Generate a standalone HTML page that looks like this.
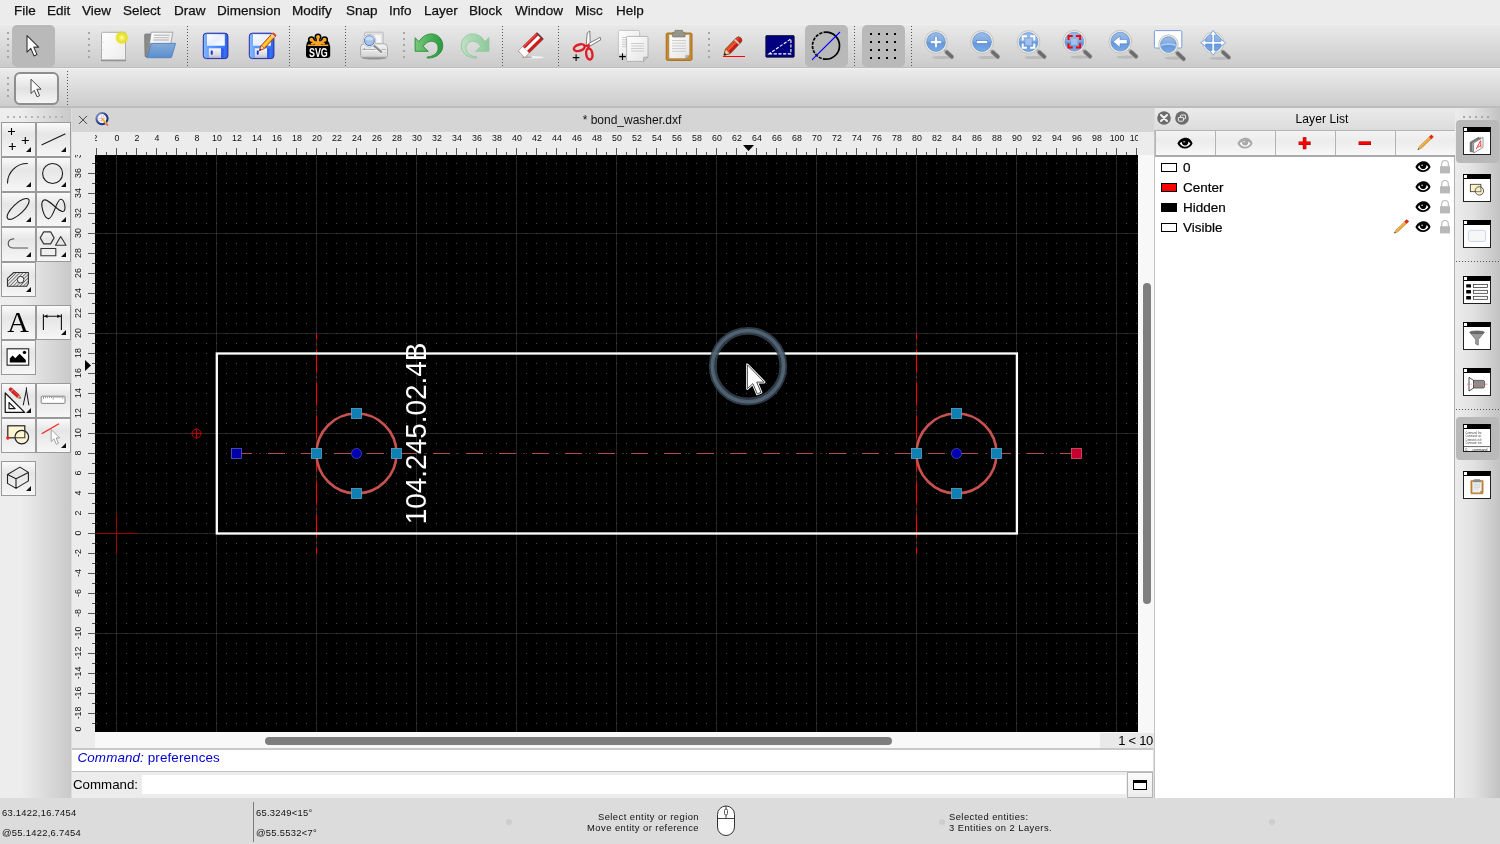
<!DOCTYPE html>
<html><head><meta charset="utf-8"><title>QCAD - bond_washer.dxf</title>
<style>
*{box-sizing:border-box;margin:0;padding:0}
html,body{width:1500px;height:844px;overflow:hidden;background:#dcdcdc;font-family:"Liberation Sans", sans-serif;color:#000}
.abs{position:absolute}
#menubar{position:absolute;left:0;top:0;width:1500px;height:24px;background:#ececec}
#menubar span{position:absolute;top:1.5px;font-size:13.5px;line-height:17px;color:#111;white-space:nowrap;-webkit-text-stroke:0.25px #111}
#tb1{position:absolute;left:0;top:24px;width:1500px;height:45px;background:linear-gradient(#f3f3f3 0,#e9e9e9 1.2px,#cbcbcb 42.8px,#bebebe 42.8px,#bebebe 44.5px,#f0f0f0 44.5px)}
#tb2{position:absolute;left:0;top:69px;width:1500px;height:39px;background:linear-gradient(#f0f0f0 0,#eaeaea 1px,#cdcdcd 36.6px,#bcbcbc 36.6px)}
.hdl{position:absolute;width:2px;background-image:linear-gradient(#a6a6a6 2px,transparent 2px);background-size:2px 6px}
.vsep{position:absolute;width:1px;background-image:linear-gradient(#555 1px,transparent 1px);background-size:1px 3px}
.sel{position:absolute;background:#b9b9b9;border-radius:5px}
svg{position:absolute;overflow:visible}
#left{position:absolute;left:0;top:108px;width:71px;height:690px;background:linear-gradient(90deg,#ededed,#ededed 30%,#c9c9c9)}
.tbtn{position:absolute;width:35px;height:35px;border:1px solid #9a9a9a;background:linear-gradient(#fafafa,#e6e6e6 35%,#f6f6f6)}
.corner{position:absolute;right:4px;bottom:4px;width:0;height:0;border-left:5px solid transparent;border-bottom:5px solid #111}
#mdi{position:absolute;left:72px;top:108px;width:1082px;height:640px;background:#ececec}
#tabbar{position:absolute;left:0;top:0;width:1082px;height:24px;background:#d5d5d5}
#canvas{position:absolute;left:23px;top:47px;width:1043px;height:577px;background:#000;overflow:hidden}
#hruler{position:absolute;left:23px;top:24px;width:1043px;height:23px;background:#ececec;overflow:hidden}
#vruler{position:absolute;left:0;top:47px;width:23px;height:577px;background:#ececec;overflow:hidden}
.rl{position:absolute;font-size:9.4px;line-height:12px;color:#111;white-space:nowrap}
#status{position:absolute;left:0;top:798px;width:1500px;height:46px;background:#dcdcdc}
#status div{position:absolute;font-size:9.4px;line-height:12px;color:#111;white-space:nowrap;letter-spacing:0.45px}
#status div.num{letter-spacing:0.28px}
#layers{position:absolute;left:1155px;top:108px;width:300px;height:690px;background:#fff;border-right:1px solid #b0b0b0}
#right{position:absolute;left:1455px;top:108px;width:45px;height:690px;background:linear-gradient(90deg,#ececec,#e2e2e2 40%,#c2c2c2)}
.lrow{position:absolute;left:0;width:298px;height:20px;font-size:13.5px;line-height:20px;-webkit-text-stroke:0.2px #000}
.lbtn{position:absolute;top:23px;height:24px;background:linear-gradient(#f4f4f4,#ececec 40%,#f8f8f8)}
</style></head><body><div id="root" style="position:absolute;left:0;top:0;width:1500px;height:844px;will-change:transform">

<div id="menubar">
<span style="left:14px">File</span>
<span style="left:47px">Edit</span>
<span style="left:82px">View</span>
<span style="left:123px">Select</span>
<span style="left:174px">Draw</span>
<span style="left:217px">Dimension</span>
<span style="left:292px">Modify</span>
<span style="left:346px">Snap</span>
<span style="left:389px">Info</span>
<span style="left:424px">Layer</span>
<span style="left:469px">Block</span>
<span style="left:515px">Window</span>
<span style="left:575px">Misc</span>
<span style="left:616px">Help</span>
</div>
<div id="tb1">
<div class="sel" style="left:12px;top:1px;width:43px;height:42px"></div>
<div class="sel" style="left:805px;top:1px;width:43px;height:42px"></div>
<div class="sel" style="left:862px;top:1px;width:43px;height:42px"></div>
<div class="hdl" style="left:7px;top:8px;height:28px"></div>
<div class="hdl" style="left:88px;top:8px;height:28px"></div>
<div class="hdl" style="left:403px;top:8px;height:28px"></div>
<div class="hdl" style="left:708px;top:8px;height:28px"></div>
<div class="vsep" style="left:187px;top:2px;height:40px"></div>
<div class="vsep" style="left:289px;top:2px;height:40px"></div>
<div class="vsep" style="left:345px;top:2px;height:40px"></div>
<div class="vsep" style="left:502px;top:2px;height:40px"></div>
<div class="vsep" style="left:558px;top:2px;height:40px"></div>
<div class="vsep" style="left:854px;top:2px;height:40px"></div>
<div class="vsep" style="left:911px;top:2px;height:40px"></div>
<svg style="left:0;top:0" width="1500" height="45" viewBox="0 24 1500 45"><defs>
<linearGradient id="gpage" x1="0" y1="0" x2="1" y2="1"><stop offset="0" stop-color="#ffffff"/><stop offset="1" stop-color="#ececec"/></linearGradient>
<radialGradient id="gglow"><stop offset="0" stop-color="#fffff0"/><stop offset="0.25" stop-color="#f4f060"/><stop offset="0.7" stop-color="#e6e020"/><stop offset="1" stop-color="#e6e020" stop-opacity="0"/></radialGradient>
<linearGradient id="gfold" x1="0" y1="0" x2="0" y2="1"><stop offset="0" stop-color="#86acd8"/><stop offset="1" stop-color="#5a8ecf"/></linearGradient>
<linearGradient id="gflop" x1="0" y1="0" x2="1" y2="0"><stop offset="0" stop-color="#8cbcff"/><stop offset="0.25" stop-color="#5c9cff"/><stop offset="0.8" stop-color="#3c7cf8"/><stop offset="1" stop-color="#2a60e8"/></linearGradient>
<linearGradient id="glabel" x1="0" y1="0" x2="1" y2="1"><stop offset="0" stop-color="#ffffff"/><stop offset="0.5" stop-color="#e8eeff"/><stop offset="1" stop-color="#ffffff"/></linearGradient>
<linearGradient id="gshut" x1="0" y1="0" x2="0" y2="1"><stop offset="0" stop-color="#f4f4f8"/><stop offset="0.7" stop-color="#d8d8e2"/><stop offset="1" stop-color="#b8b8c8"/></linearGradient>
<linearGradient id="gpencil" x1="0" y1="0" x2="0" y2="1"><stop offset="0" stop-color="#ff9a00"/><stop offset="0.45" stop-color="#ffe040"/><stop offset="1" stop-color="#ff8c00"/></linearGradient>
<linearGradient id="gredp" x1="0" y1="0" x2="0" y2="1"><stop offset="0" stop-color="#e85a30"/><stop offset="0.5" stop-color="#e02020"/><stop offset="1" stop-color="#c01010"/></linearGradient>
<linearGradient id="gundo" x1="0" y1="0" x2="1" y2="0"><stop offset="0" stop-color="#78c878"/><stop offset="1" stop-color="#2a9a40"/></linearGradient>
<linearGradient id="gredo" x1="0" y1="0" x2="1" y2="0"><stop offset="0" stop-color="#8cc89a"/><stop offset="1" stop-color="#bfe2c4"/></linearGradient>
<linearGradient id="glens" x1="0" y1="0" x2="0" y2="1"><stop offset="0" stop-color="#9cbde6"/><stop offset="0.5" stop-color="#7ea8e0"/><stop offset="0.51" stop-color="#6496dc"/><stop offset="1" stop-color="#78aae6"/></linearGradient>
<linearGradient id="gprn" x1="0" y1="0" x2="0" y2="1"><stop offset="0" stop-color="#f4f4f4"/><stop offset="1" stop-color="#d4d4d4"/></linearGradient>
<linearGradient id="gpaper" x1="0" y1="0" x2="1" y2="1"><stop offset="0" stop-color="#ffffff"/><stop offset="1" stop-color="#e4e4e4"/></linearGradient>
</defs><path d="M27.00 35.60L27.00 52.10L30.80 48.40L34.00 55.90L37.00 54.60L33.80 47.10L38.70 47.10Z" fill="#fff" stroke="#333" stroke-width="1.1" stroke-linejoin="round"/><rect x="101" y="59" width="25" height="2.2" rx="1" fill="#8c8c8c"/><rect x="101.5" y="32.3" width="24" height="27.6" rx="1.2" fill="url(#gpage)" stroke="#a4a4a4" stroke-width="0.9"/><path d="M103 42.2h1.2M103 49.6h1.2" stroke="#c8c8c8" stroke-width="0.7"/><circle cx="121.8" cy="37.7" r="7" fill="url(#gglow)"/><path d="M144.6 35.2q0-1.2 1.2-1.2h5.5l-3 23h-2.2q-1 0-1.1-1z" fill="#8a8a8a" stroke="#666" stroke-width="0.6"/><path d="M151.2 32.2h21.6l-2 11.5h-20.8l-2.2 12z" fill="url(#gpaper)" stroke="#888" stroke-width="0.7"/><path d="M154 35.3h15.8M153.6 37.6h15.6M153.2 40h15.6" stroke="#c4c4c4" stroke-width="1.4"/><path d="M151.4 43.4h24.2l-3.9 13.4q-.3.9-1.2.9h-23.4z" fill="url(#gfold)" stroke="#4a7cc0" stroke-width="0.8" stroke-linejoin="round"/><rect x="203.3" y="33.2" width="24.6" height="25.4" rx="3" fill="url(#gflop)" stroke="#2a2aa0" stroke-width="1"/><rect x="207.0" y="34.2" width="17.8" height="11.5" fill="url(#glabel)"/><rect x="208.8" y="48.3" width="12.3" height="9.6" fill="url(#gshut)"/><rect x="221.10000000000002" y="48.3" width="2.6" height="9.6" fill="#2a5cf0"/><rect x="210.8" y="50.4" width="1.9" height="4.3" rx="0.6" fill="#1030e0"/><rect x="249.3" y="33.2" width="24.6" height="25.4" rx="3" fill="url(#gflop)" stroke="#2a2aa0" stroke-width="1"/><rect x="253.0" y="34.2" width="17.8" height="11.5" fill="url(#glabel)"/><rect x="254.8" y="48.3" width="12.3" height="9.6" fill="url(#gshut)"/><rect x="267.1" y="48.3" width="2.6" height="9.6" fill="#2a5cf0"/><rect x="256.8" y="50.4" width="1.9" height="4.3" rx="0.6" fill="#1030e0"/><g transform="translate(259.4 50.7) rotate(-47.5)"><path d="M0 0L5.2 -2.2H21.5Q22.8 -2.2 22.8 0Q22.8 2.2 21.5 2.2H5.2Z" fill="url(#gpencil)" stroke="#b03010" stroke-width="0.8" stroke-linejoin="round"/><path d="M0 0L5.2 -2.2V2.2Z" fill="#f4dcb4" stroke="#b03010" stroke-width="0.6"/><path d="M0 0L1.9 -0.8V0.8Z" fill="#222"/><path d="M19.3 -2.2h1.6v4.4h-1.6z" fill="#d8d8d0"/><path d="M20.9 -2.2H21.5Q22.8 -2.2 22.8 0Q22.8 2.2 21.5 2.2H20.9Z" fill="#d85028"/></g><g stroke="#000" stroke-width="2.6" stroke-linecap="round" fill="none"><path d="M318 45.4L318.0 37.0" stroke-width="4.6"/><circle cx="318.0" cy="37.0" r="1.9" stroke-width="3.2"/><path d="M318 45.4L311.4 39.7" stroke-width="4.6"/><circle cx="311.4" cy="39.7" r="1.9" stroke-width="3.2"/><path d="M318 45.4L324.6 39.7" stroke-width="4.6"/><circle cx="324.6" cy="39.7" r="1.9" stroke-width="3.2"/><path d="M318 45.4L310.1 44.3" stroke-width="4.6"/><circle cx="310.1" cy="44.3" r="1.9" stroke-width="3.2"/><path d="M318 45.4L325.9 44.3" stroke-width="4.6"/><circle cx="325.9" cy="44.3" r="1.9" stroke-width="3.2"/></g><rect x="306" y="43.8" width="24.2" height="14.2" rx="3" fill="#000"/><g stroke="#f9a72b" stroke-linecap="round" fill="none"><path d="M318.0 43.4L318.0 37.0" stroke-width="2.4"/><circle cx="318.0" cy="37.0" r="1" stroke-width="2"/><path d="M316.5 44.1L311.4 39.7" stroke-width="2.4"/><circle cx="311.4" cy="39.7" r="1" stroke-width="2"/><path d="M319.5 44.1L324.6 39.7" stroke-width="2.4"/><circle cx="324.6" cy="39.7" r="1" stroke-width="2"/><path d="M308.3 45.3H327.7" stroke-width="1.6"/><path d="M312 43.6Q318 40.5 324 43.6" stroke-width="2"/></g><text x="309" y="56.8" font-family='"Liberation Sans", sans-serif' font-weight="bold" font-size="13.6" fill="#fff" textLength="18.8" lengthAdjust="spacingAndGlyphs">SVG</text><ellipse cx="374" cy="57.8" rx="12.5" ry="1.8" fill="#808080" fill-opacity="0.8"/><rect x="364.6" y="32.2" width="18.6" height="13" rx="0.8" fill="#e2e2e2" stroke="#b4b4b4" stroke-width="0.8"/><rect x="375" y="35" width="6" height="7.5" fill="#f6f6f6"/><path d="M360.6 47.5Q360.6 43.8 364 43.8H384Q387.5 43.8 387.5 47.5V55.5Q387.5 57.2 385.8 57.2H362.3Q360.6 57.2 360.6 55.5Z" fill="url(#gprn)" stroke="#a4a4a4" stroke-width="0.9"/><path d="M362.5 49.6H385.6" stroke="#a8a8a8" stroke-width="1"/><path d="M362.5 50.6H385.6" stroke="#fafafa" stroke-width="0.8"/><circle cx="364.3" cy="48.8" r="0.5" fill="#666"/><path d="M374.2 45.8L381.3 51.8" stroke="#f0f0f0" stroke-width="4" stroke-linecap="round"/><path d="M374.2 45.8L381.3 51.8" stroke="#8c8c8c" stroke-width="2.2" stroke-linecap="round"/><circle cx="369.4" cy="40.7" r="6.4" fill="#f6f6f6" stroke="#b0b0b0" stroke-width="0.7"/><circle cx="369.4" cy="40.7" r="4.9" fill="#a8c2e4" stroke="#3a78d0" stroke-width="1"/><path d="M365 39.5A4.6 4.6 0 0 1 373.8 39.5Q369.4 41.5 365 39.5Z" fill="#d4e2f4" fill-opacity="0.8"/><path d="M414.6 37.4V51.5H428.2L422.9 46.4C425.5 42.6 429.5 40.6 432.8 41.2C436.8 42 439 45.5 438.3 49.6C437.6 53.6 433.8 56.8 427 57.4C427 57.6 427 58.2 427.4 58.5C436.5 58.6 442.6 53.5 443.2 46.8C443.8 39.5 438.8 34 432.5 33.5C427 33.1 421.5 36.5 418.6 41.5Z" fill="url(#gundo)" stroke="#1f8a34" stroke-width="0.9" stroke-linejoin="round" transform="translate(429 46) scale(0.965) translate(-429 -46)"/><path d="M414.6 37.4V51.5H428.2L422.9 46.4C425.5 42.6 429.5 40.6 432.8 41.2C436.8 42 439 45.5 438.3 49.6C437.6 53.6 433.8 56.8 427 57.4C427 57.6 427 58.2 427.4 58.5C436.5 58.6 442.6 53.5 443.2 46.8C443.8 39.5 438.8 34 432.5 33.5C427 33.1 421.5 36.5 418.6 41.5Z" fill="url(#gredo)" stroke="#8cc69a" stroke-width="0.9" stroke-linejoin="round" transform="translate(904 0) scale(-1 1) translate(429 46) scale(0.965) translate(-429 -46)"/><ellipse cx="534" cy="57.3" rx="10" ry="1.3" fill="#f4f4f4" fill-opacity="0.9"/><ellipse cx="527" cy="57.2" rx="5" ry="0.9" fill="#9a7a7a" fill-opacity="0.6"/><g transform="translate(521.5 54.1) rotate(-44.4)"><rect x="0" y="-4.6" width="26.2" height="9.2" rx="0.8" fill="#d01a1a" stroke="#8a1010" stroke-width="0.5"/><rect x="0" y="-1.6" width="25.6" height="3.2" fill="#fff"/><rect x="0" y="-4.6" width="6.2" height="9.2" fill="#fff" stroke="#b0b0b0" stroke-width="0.5"/><rect x="24.8" y="-4.6" width="1.5" height="9.2" fill="#6a3a3a"/><rect x="6.2" y="-4.6" width="18.6" height="1.6" fill="#e86060" fill-opacity="0.7"/></g><path d="M586.2 45.5L587.2 33L589.8 31L590.3 45.8Z" fill="#fff" stroke="#606060" stroke-width="0.8" stroke-linejoin="round"/><path d="M588.6 43.5L600.2 37.3L600.8 39.8L589.5 46.3Z" fill="#fff" stroke="#606060" stroke-width="0.8" stroke-linejoin="round"/><ellipse cx="579.3" cy="47.7" rx="5.6" ry="3.1" transform="rotate(-18 579.3 47.7)" fill="none" stroke="#e01c24" stroke-width="2.4"/><ellipse cx="589.3" cy="54" rx="3.1" ry="5.6" transform="rotate(-8 589.3 54)" fill="none" stroke="#e01c24" stroke-width="2.4"/><path d="M584 46.5L588.5 45.2L588.2 49" stroke="#e01c24" stroke-width="2.3" fill="none"/><path d="M572.8 57.6h6.6M576.1 54.3v6.6" stroke="#000" stroke-width="1.1"/><path d="M619.6 30.4H638.4Q639.6 30.4 639.6 31.6V55H618.4V31.6Q618.4 30.4 619.6 30.4Z" fill="url(#gpaper)" stroke="#b4b4b4" stroke-width="0.7"/><path d="M622 37.5h6M622 39.8h6M622 42.1h6M622 44.4h6M622 46.7h6" stroke="#c8c8c8" stroke-width="0.9"/><path d="M627.8 36.4H646.8Q648 36.4 648 37.6V57L643.5 61.4H627.8Q626.6 61.4 626.6 60.2V37.6Q626.6 36.4 627.8 36.4Z" fill="url(#gpaper)" stroke="#a8a8a8" stroke-width="0.8"/><path d="M643.5 61.4V57.6Q643.5 57 644.1 57H648Z" fill="#c4c4c4" stroke="#999" stroke-width="0.5"/><path d="M631 43.5h13M631 46.0h13M631 48.5h13M631 51.0h13" stroke="#c8c8c8" stroke-width="0.9"/><path d="M619.2 56.6h6.6M622.5 53.3v6.6" stroke="#000" stroke-width="1.1"/><rect x="666.2" y="33" width="25.8" height="27.4" rx="1.4" fill="#c88a2c" stroke="#a06a14" stroke-width="0.9"/><path d="M669 34.6H689.6V55L686 58.6H669Z" fill="url(#gpaper)" stroke="#9a8a6a" stroke-width="0.5"/><path d="M685.6 58.6V55.4H689.6Z" fill="#b8b8b8" stroke="#8a8a8a" stroke-width="0.4"/><path d="M672 40.5h14M672 43.2h14M672 45.9h14M672 48.6h14M672 51.3h14" stroke="#c8c8c8" stroke-width="0.9"/><path d="M675 30.3H682.6V32.2H684Q685.2 32.2 685.2 33.4V36.4Q685.2 37 684.6 37H673Q672.4 37 672.4 36.4V33.4Q672.4 32.2 673.6 32.2H675Z" fill="#95958a" stroke="#70706a" stroke-width="0.6"/><path d="M723 56.5H745" stroke="#d8f0f0" stroke-width="2.6"/><path d="M723 56.5H745" stroke="#ff0000" stroke-width="1.2"/><g transform="translate(724 55.3) rotate(-46)"><path d="M0 0L5.6 -3.2H21Q24.2 -3.2 24.2 0Q24.2 3.2 21 3.2H5.6Z" fill="url(#gredp)" stroke="#7a4a10" stroke-width="0.9" stroke-linejoin="round"/><path d="M0 0L5.6 -3.2V3.2Z" fill="#f4cca4" stroke="#7a4a10" stroke-width="0.6"/><path d="M0 0L2.3 -1.3V1.3Z" fill="#111"/><path d="M17.8 -3.2h1.7v6.4h-1.7z" fill="#d0d0d0"/><path d="M6 -0.6H17.5" stroke="#e87040" stroke-width="1.2"/></g><rect x="765.8" y="35.6" width="28.4" height="21.6" rx="0.8" fill="#000080" stroke="#101020" stroke-width="0.8"/><path d="M769 53.9H790.9V38.9Z" fill="none" stroke="#fff" stroke-width="1.1" stroke-dasharray="3.2 1.5"/><path d="M826 32.2A13.5 13.5 0 0 1 826 59.2" fill="none" stroke="#000" stroke-width="1.7"/><path d="M826 59.2A13.5 13.5 0 0 1 826 32.2" fill="none" stroke="#000" stroke-width="1.7" stroke-dasharray="3.2 1.2"/><path d="M812 59.8L840 32" stroke="#0000ff" stroke-width="1.1"/><path d="M870 33h2v2h-2zM870 41h2v2h-2zM870 49h2v2h-2zM870 57h2v2h-2zM878 33h2v2h-2zM878 41h2v2h-2zM878 49h2v2h-2zM878 57h2v2h-2zM886 33h2v2h-2zM886 41h2v2h-2zM886 49h2v2h-2zM886 57h2v2h-2zM894 33h2v2h-2zM894 41h2v2h-2zM894 49h2v2h-2zM894 57h2v2h-2z" fill="#000"/><ellipse cx="942" cy="57.5" rx="10" ry="1.6" fill="#a8a8a8" fill-opacity="0.55"/><path d="M943.4 49.2L947.0 52.4" stroke="#b4b4b4" stroke-width="1.8"/><path d="M946.6 52.0L951.8 56.8" stroke="#a4a4a4" stroke-width="4.6" stroke-linecap="round"/><path d="M946.8 52.2L951.8 56.8" stroke="#6c6c6c" stroke-width="3.2" stroke-linecap="round"/><circle cx="936" cy="42" r="11.4" fill="#ecece6" stroke="#b4b4ac" stroke-width="0.7"/><circle cx="936" cy="42" r="9.4" fill="url(#glens)" stroke="#5a8cd4" stroke-width="0.7"/><path d="M930.3 40.6H934.6V36.3H937.4V40.6H941.7V43.4H937.4V47.7H934.6V43.4H930.3Z" fill="#fff" stroke="#4a7cc8" stroke-width="0.6"/><ellipse cx="988" cy="57.5" rx="10" ry="1.6" fill="#a8a8a8" fill-opacity="0.55"/><path d="M989.4 49.2L993.0 52.4" stroke="#b4b4b4" stroke-width="1.8"/><path d="M992.6 52.0L997.8 56.8" stroke="#a4a4a4" stroke-width="4.6" stroke-linecap="round"/><path d="M992.8 52.2L997.8 56.8" stroke="#6c6c6c" stroke-width="3.2" stroke-linecap="round"/><circle cx="982" cy="42" r="11.4" fill="#ecece6" stroke="#b4b4ac" stroke-width="0.7"/><circle cx="982" cy="42" r="9.4" fill="url(#glens)" stroke="#5a8cd4" stroke-width="0.7"/><rect x="976.3" y="40.6" width="11.4" height="2.8" fill="#fff" stroke="#4a7cc8" stroke-width="0.6"/><ellipse cx="1034.5" cy="57.5" rx="10" ry="1.6" fill="#a8a8a8" fill-opacity="0.55"/><path d="M1035.9 49.2L1039.5 52.4" stroke="#b4b4b4" stroke-width="1.8"/><path d="M1039.1 52.0L1044.3 56.8" stroke="#a4a4a4" stroke-width="4.6" stroke-linecap="round"/><path d="M1039.3 52.2L1044.3 56.8" stroke="#6c6c6c" stroke-width="3.2" stroke-linecap="round"/><circle cx="1028.5" cy="42" r="11.4" fill="#ecece6" stroke="#b4b4ac" stroke-width="0.7"/><circle cx="1028.5" cy="42" r="9.4" fill="url(#glens)" stroke="#5a8cd4" stroke-width="0.7"/><rect x="1025.3" y="38.8" width="6.4" height="6.4" fill="#a4c0ea"/><path d="M1022.7 40.4V36.2H1026.9M1022.7 43.6V47.8H1026.9M1034.3 40.4V36.2H1030.1M1034.3 43.6V47.8H1030.1" stroke="#fff" stroke-width="2" fill="none"/><ellipse cx="1080.3" cy="57.2" rx="10" ry="1.6" fill="#a8a8a8" fill-opacity="0.55"/><path d="M1081.7 48.9L1085.3 52.1" stroke="#b4b4b4" stroke-width="1.8"/><path d="M1084.9 51.7L1090.1 56.5" stroke="#a4a4a4" stroke-width="4.6" stroke-linecap="round"/><path d="M1085.1 51.9L1090.1 56.5" stroke="#6c6c6c" stroke-width="3.2" stroke-linecap="round"/><circle cx="1074.3" cy="41.7" r="11.4" fill="#ecece6" stroke="#b4b4ac" stroke-width="0.7"/><circle cx="1074.3" cy="41.7" r="9.4" fill="url(#glens)" stroke="#5a8cd4" stroke-width="0.7"/><rect x="1071.1" y="38.5" width="6.4" height="6.4" fill="#a4c0ea"/><path d="M1068.5 40.1V35.900000000000006H1072.7M1068.5 43.300000000000004V47.5H1072.7M1080.1 40.1V35.900000000000006H1075.8999999999999M1080.1 43.300000000000004V47.5H1075.8999999999999" stroke="#ff0000" stroke-width="2" fill="none"/><ellipse cx="1126.3" cy="57.2" rx="10" ry="1.6" fill="#a8a8a8" fill-opacity="0.55"/><path d="M1127.7 48.9L1131.3 52.1" stroke="#b4b4b4" stroke-width="1.8"/><path d="M1130.9 51.7L1136.1 56.5" stroke="#a4a4a4" stroke-width="4.6" stroke-linecap="round"/><path d="M1131.1 51.9L1136.1 56.5" stroke="#6c6c6c" stroke-width="3.2" stroke-linecap="round"/><circle cx="1120.3" cy="41.7" r="11.4" fill="#ecece6" stroke="#b4b4ac" stroke-width="0.7"/><circle cx="1120.3" cy="41.7" r="9.4" fill="url(#glens)" stroke="#5a8cd4" stroke-width="0.7"/><path d="M1113.2 41.7L1120 36V39.6H1127.2V43.8H1120V47.4Z" fill="#fff" stroke="#4a7cc8" stroke-width="0.6" stroke-linejoin="round"/><rect x="1154.4" y="30.6" width="27.4" height="17.4" rx="1.2" fill="#fff" stroke="#6a92d8" stroke-width="0.9"/><ellipse cx="1174.4" cy="58.1" rx="10" ry="1.6" fill="#a8a8a8" fill-opacity="0.55"/><path d="M1174.8 50.8L1177.9 53.5" stroke="#b4b4b4" stroke-width="1.8"/><path d="M1177.5 53.2L1183.7 59.0" stroke="#a4a4a4" stroke-width="4.6" stroke-linecap="round"/><path d="M1177.7 53.4L1183.7 59.0" stroke="#6c6c6c" stroke-width="3.2" stroke-linecap="round"/><circle cx="1168.4" cy="44.6" r="9.8" fill="#ecece6" stroke="#b4b4ac" stroke-width="0.7"/><circle cx="1168.4" cy="44.6" r="7.800000000000001" fill="url(#glens)" stroke="#5a8cd4" stroke-width="0.7"/><path d="M1161 45.5Q1168.4 42.5 1175.8 45.5" stroke="#c4d8f4" stroke-width="1.6" fill="none" opacity="0.8"/><ellipse cx="1219.2" cy="58.3" rx="10" ry="1.6" fill="#a8a8a8" fill-opacity="0.55"/><path d="M1220.1 49.5L1223.4 52.5" stroke="#b4b4b4" stroke-width="1.8"/><path d="M1223.1 52.1L1228.7 57.4" stroke="#a4a4a4" stroke-width="4.6" stroke-linecap="round"/><path d="M1223.2 52.3L1228.7 57.4" stroke="#6c6c6c" stroke-width="3.2" stroke-linecap="round"/><circle cx="1213.2" cy="42.8" r="10.6" fill="#ecece6" stroke="#b4b4ac" stroke-width="0.7"/><circle cx="1213.2" cy="42.8" r="8.6" fill="url(#glens)" stroke="#5a8cd4" stroke-width="0.7"/><path d="M1213.2 30.4L1216.6 35.2H1214.4V41.6H1220.8V39.4L1225.8 42.8L1220.8 46.2V44H1214.4V50.4H1216.6L1213.2 55.2L1209.8 50.4H1212V44H1205.6V46.2L1200.6 42.8L1205.6 39.4V41.6H1212V35.2H1209.8Z" fill="#fff" stroke="#5a8cd8" stroke-width="0.7" stroke-linejoin="round"/></svg>
</div>
<div id="tb2">
<div class="hdl" style="left:7px;top:8px;height:22px"></div>
<div class="vsep" style="left:67px;top:2px;height:35px"></div>
<div class="abs" style="left:14px;top:3px;width:45px;height:33px;border:2px solid #8e8e8e;border-radius:6px;background:linear-gradient(#fafafa,#e2e2e2 50%,#f4f4f4)"></div>
<svg style="left:0;top:0" width="200" height="39" viewBox="0 69 200 39"><path d="M31.00 79.30L31.00 93.49L34.27 90.31L37.02 96.76L39.60 95.64L36.85 89.19L41.06 89.19Z" fill="#fff" stroke="#444" stroke-width="1.0" stroke-linejoin="round"/></svg>
</div>
<div id="left">
<div class="abs" style="left:7px;top:8px;width:2px;height:2px;background:#b4b4b4"></div>
<div class="abs" style="left:13px;top:8px;width:2px;height:2px;background:#b4b4b4"></div>
<div class="abs" style="left:19px;top:8px;width:2px;height:2px;background:#b4b4b4"></div>
<div class="abs" style="left:25px;top:8px;width:2px;height:2px;background:#b4b4b4"></div>
<div class="abs" style="left:31px;top:8px;width:2px;height:2px;background:#b4b4b4"></div>
<div class="abs" style="left:37px;top:8px;width:2px;height:2px;background:#b4b4b4"></div>
<div class="abs" style="left:43px;top:8px;width:2px;height:2px;background:#b4b4b4"></div>
<div class="abs" style="left:49px;top:8px;width:2px;height:2px;background:#b4b4b4"></div>
<div class="abs" style="left:55px;top:8px;width:2px;height:2px;background:#b4b4b4"></div>
<div class="abs" style="left:61px;top:8px;width:2px;height:2px;background:#b4b4b4"></div>
<div class="tbtn" style="left:1px;top:14px"><div class="corner"></div></div>
<div class="tbtn" style="left:36px;top:14px"><div class="corner"></div></div>
<div class="tbtn" style="left:1px;top:49px"><div class="corner"></div></div>
<div class="tbtn" style="left:36px;top:49px"><div class="corner"></div></div>
<div class="tbtn" style="left:1px;top:84px"><div class="corner"></div></div>
<div class="tbtn" style="left:36px;top:84px"><div class="corner"></div></div>
<div class="tbtn" style="left:1px;top:119px"><div class="corner"></div></div>
<div class="tbtn" style="left:36px;top:119px"><div class="corner"></div></div>
<div class="tbtn" style="left:1px;top:154px"><div class="corner"></div></div>
<div class="tbtn" style="left:1px;top:197px"></div>
<div class="tbtn" style="left:36px;top:197px"><div class="corner"></div></div>
<div class="tbtn" style="left:1px;top:232px"></div>
<div class="tbtn" style="left:1px;top:275px"><div class="corner"></div></div>
<div class="tbtn" style="left:36px;top:275px"></div>
<div class="tbtn" style="left:1px;top:310px"></div>
<div class="tbtn" style="left:36px;top:310px"><div class="corner"></div></div>
<div class="tbtn" style="left:1px;top:353px"><div class="corner"></div></div>
<svg style="left:0;top:0" width="71" height="690" viewBox="0 108 71 690"><path d="M8 131.5h7M11.5 128v7M21.8 140.5h7M25.3 137v7M8.8 146.5h7M12.3 143v7" stroke="#000" stroke-width="1.1" fill="none"/><path d="M42 144.8L65 134" stroke="#1a1a1a" stroke-width="1.1" fill="none" stroke-linecap="round" stroke-linejoin="round"/><path d="M7.5 183A19.7 19.7 0 0 1 27.4 163.5" stroke="#1a1a1a" stroke-width="1.1" fill="none" stroke-linecap="round" stroke-linejoin="round"/><circle cx="52.6" cy="173.5" r="10" stroke="#1a1a1a" stroke-width="1.1" fill="none" stroke-linecap="round" stroke-linejoin="round"/><ellipse cx="18.1" cy="208.9" rx="14.2" ry="5.2" transform="rotate(-43 18.1 208.9)" stroke="#1a1a1a" stroke-width="1.1" fill="none" stroke-linecap="round" stroke-linejoin="round"/><path d="M43.5 200.2C39.5 203 44 219.3 48.8 218.6C53.6 217.9 56.5 199.5 60.6 199.3C64.5 199.1 67 211 63 211.5C58 212.1 48 197.2 43.5 200.2Z" stroke="#1a1a1a" stroke-width="1.1" fill="none" stroke-linecap="round" stroke-linejoin="round"/><path d="M13.8 238.8C10 238.8 8.2 241 8.2 243.4C8.2 246 10.5 248 13.5 248H27.6" stroke="#555" stroke-width="1.2" fill="none" stroke-linecap="round"/><path d="M40.2 237.9L43.7 231.9H50.6L54.1 237.9L50.6 243.9H43.7Z M60.7 236.5L66 245.3H55.5Z M40.9 248.5H55.8V255.7H40.9Z" stroke="#333" stroke-width="1.1" fill="none" stroke-linejoin="round"/><defs><pattern id="hat" width="2.4" height="2.4" patternUnits="userSpaceOnUse" patternTransform="rotate(-45)"><rect width="2.4" height="0.7" fill="#555"/></pattern></defs><path d="M7.5 286.3V278.3L13.8 272.5H28.4V283.2L26.7 286.3Z" fill="url(#hat)" stroke="#333" stroke-width="1.1" stroke-linejoin="round"/><circle cx="20.6" cy="279.7" r="3.3" fill="#f0f0f0" stroke="#333" stroke-width="1"/><text x="18" y="331.8" text-anchor="middle" font-family='"Liberation Serif", serif' font-size="30" fill="#000">A</text><path d="M43.4 314.2V329.9M61.4 314.2V329.9M44 316.3H61" stroke="#111" stroke-width="1.1" fill="none"/><path d="M43.9 316.3L47.5 314.6V318ZM60.9 316.3L57.3 314.6V318Z" fill="#111"/><rect x="7.1" y="348.8" width="21.6" height="16.4" fill="#fff" stroke="#222" stroke-width="1.1"/><path d="M9.8 362.6V358.5L12.6 355.6L15.3 358.2L19.6 353.8L25.8 360V362.6Z" fill="#000"/><circle cx="24.5" cy="352.4" r="1.7" fill="#000"/><path d="M5.2 393V412.4H24.6Z" fill="#fff" stroke="#111" stroke-width="1.2" stroke-linejoin="round"/><path d="M9 402.5V408.6H15.2Z" fill="#f0f0f0" stroke="#111" stroke-width="1.1" stroke-linejoin="round"/><g transform="translate(20.5 398.3) rotate(222.2)"><path d="M0 0L3 -1.7H13Q14.8 -1.7 14.8 0Q14.8 1.7 13 1.7H3Z" fill="#d81a1a" stroke="#8a1414" stroke-width="0.5" stroke-linejoin="round"/><path d="M0 0L3 -1.7V1.7Z" fill="#e8b888" stroke="#9a6a3a" stroke-width="0.3"/><path d="M0 0L1.1 -0.6V0.6Z" fill="#333"/><path d="M3.4 0.6H12.6" stroke="#f06a5a" stroke-width="0.7"/><path d="M11.6 -1.7v3.4" stroke="#f0c0c0" stroke-width="0.8"/></g><path d="M26.4 387.3V391M26.4 390L23.2 405.3M26.4 390L28.9 405.3" stroke="#111" stroke-width="1" fill="none"/><rect x="41.2" y="396.2" width="23.8" height="7.2" rx="0.8" fill="#fff" stroke="#777" stroke-width="0.9"/><path d="M43.5 396.5v2.5M45.5 396.5v1.6M47.5 396.5v1.6M49.5 396.5v1.6M51.5 396.5v1.6M53.2 396.5v3M55 396.5v1.6M57 396.5v1.6M59 396.5v1.6M61 396.5v1.6M62.8 396.5v2.5" stroke="#777" stroke-width="0.7"/><rect x="7.8" y="425.8" width="17" height="12" fill="#fff6d2" stroke="#222" stroke-width="1.2"/><circle cx="21.8" cy="437.1" r="6.8" fill="#fff6d2" fill-opacity="0.85" stroke="#222" stroke-width="1.2"/><path d="M14.9 437.8H24.8V430.3" stroke="#444" stroke-width="1.1" fill="none"/><circle cx="7.8" cy="438" r="1.7" fill="#ff2020"/><path d="M41.7 433.8L59 423.8" stroke="#ff2020" stroke-width="1.3"/><path d="M51.20 429.60L51.20 441.48L53.94 438.82L56.24 444.22L58.40 443.28L56.10 437.88L59.62 437.88Z" fill="#fff" stroke="#999" stroke-width="0.9" stroke-linejoin="round"/><path d="M19.9 467.1L7.5 474.5L16 478.8L28.4 472.4ZM7.5 474.5V483.4L16 488.4V478.8M16 488.4L28.4 480.9V472.4" stroke="#222" stroke-width="1.1" fill="none" stroke-linejoin="round"/></svg>
</div>
<div id="mdi">
<div id="tabbar"><svg style="left:0;top:0" width="100" height="24" viewBox="72 108 100 24"><defs><linearGradient id="gq" x1="0" y1="0" x2="1" y2="1"><stop offset="0" stop-color="#9aaad8"/><stop offset="0.45" stop-color="#2a4090"/><stop offset="1" stop-color="#182c78"/></linearGradient></defs><path d="M79 115.9L87 123.9M87 115.9L79 123.9" stroke="#444" stroke-width="1"/><circle cx="102" cy="118.6" r="5.6" fill="#f6f6f6" stroke="url(#gq)" stroke-width="2.1"/><path d="M101.6 114.6V122.4M98.2 118.4H105.6" stroke="#b8b8b8" stroke-width="0.6"/><path d="M99 120.4H102.4M103 115.2L104 117.6" stroke="#f08080" stroke-width="0.5"/><path d="M102.8 119.2L106.6 124" stroke="#f0a418" stroke-width="1.9" stroke-linecap="round"/><path d="M103.2 119.2L106.4 123.2" stroke="#fcd870" stroke-width="0.6"/><path d="M106.8 124.2L107.4 125" stroke="#e86060" stroke-width="1.9" stroke-linecap="round"/></svg><div class="abs" style="left:0;top:6.3px;width:1120px;text-align:center;font-size:12px;line-height:13px;color:#111">* bond_washer.dxf</div></div>
<div id="hruler">
<div class="abs" style="left:-9.0px;top:20px;width:1px;height:3px;background:#555"></div>
<div class="abs" style="left:1.0px;top:16px;width:1px;height:7px;background:#585858"></div>
<div class="rl" style="left:-19.7px;top:0px;width:40px;text-align:center;transform:scaleX(0.94)">2</div>
<div class="abs" style="left:11.0px;top:20px;width:1px;height:3px;background:#555"></div>
<div class="abs" style="left:21.0px;top:16px;width:1px;height:7px;background:#585858"></div>
<div class="rl" style="left:1.5px;top:0px;width:40px;text-align:center;transform:scaleX(0.94)">0</div>
<div class="abs" style="left:31.0px;top:20px;width:1px;height:3px;background:#555"></div>
<div class="abs" style="left:41.0px;top:16px;width:1px;height:7px;background:#585858"></div>
<div class="rl" style="left:21.5px;top:0px;width:40px;text-align:center;transform:scaleX(0.94)">2</div>
<div class="abs" style="left:51.0px;top:20px;width:1px;height:3px;background:#555"></div>
<div class="abs" style="left:61.0px;top:16px;width:1px;height:7px;background:#585858"></div>
<div class="rl" style="left:41.5px;top:0px;width:40px;text-align:center;transform:scaleX(0.94)">4</div>
<div class="abs" style="left:71.0px;top:20px;width:1px;height:3px;background:#555"></div>
<div class="abs" style="left:81.0px;top:16px;width:1px;height:7px;background:#585858"></div>
<div class="rl" style="left:61.5px;top:0px;width:40px;text-align:center;transform:scaleX(0.94)">6</div>
<div class="abs" style="left:91.0px;top:20px;width:1px;height:3px;background:#555"></div>
<div class="abs" style="left:101.0px;top:16px;width:1px;height:7px;background:#585858"></div>
<div class="rl" style="left:81.5px;top:0px;width:40px;text-align:center;transform:scaleX(0.94)">8</div>
<div class="abs" style="left:111.0px;top:20px;width:1px;height:3px;background:#555"></div>
<div class="abs" style="left:121.0px;top:16px;width:1px;height:7px;background:#585858"></div>
<div class="rl" style="left:101.5px;top:0px;width:40px;text-align:center;transform:scaleX(0.94)">10</div>
<div class="abs" style="left:131.0px;top:20px;width:1px;height:3px;background:#555"></div>
<div class="abs" style="left:141.0px;top:16px;width:1px;height:7px;background:#585858"></div>
<div class="rl" style="left:121.5px;top:0px;width:40px;text-align:center;transform:scaleX(0.94)">12</div>
<div class="abs" style="left:151.0px;top:20px;width:1px;height:3px;background:#555"></div>
<div class="abs" style="left:161.0px;top:16px;width:1px;height:7px;background:#585858"></div>
<div class="rl" style="left:141.5px;top:0px;width:40px;text-align:center;transform:scaleX(0.94)">14</div>
<div class="abs" style="left:171.0px;top:20px;width:1px;height:3px;background:#555"></div>
<div class="abs" style="left:181.0px;top:16px;width:1px;height:7px;background:#585858"></div>
<div class="rl" style="left:161.5px;top:0px;width:40px;text-align:center;transform:scaleX(0.94)">16</div>
<div class="abs" style="left:191.0px;top:20px;width:1px;height:3px;background:#555"></div>
<div class="abs" style="left:201.0px;top:16px;width:1px;height:7px;background:#585858"></div>
<div class="rl" style="left:181.5px;top:0px;width:40px;text-align:center;transform:scaleX(0.94)">18</div>
<div class="abs" style="left:211.0px;top:20px;width:1px;height:3px;background:#555"></div>
<div class="abs" style="left:221.0px;top:16px;width:1px;height:7px;background:#585858"></div>
<div class="rl" style="left:201.5px;top:0px;width:40px;text-align:center;transform:scaleX(0.94)">20</div>
<div class="abs" style="left:231.0px;top:20px;width:1px;height:3px;background:#555"></div>
<div class="abs" style="left:241.0px;top:16px;width:1px;height:7px;background:#585858"></div>
<div class="rl" style="left:221.5px;top:0px;width:40px;text-align:center;transform:scaleX(0.94)">22</div>
<div class="abs" style="left:251.0px;top:20px;width:1px;height:3px;background:#555"></div>
<div class="abs" style="left:261.0px;top:16px;width:1px;height:7px;background:#585858"></div>
<div class="rl" style="left:241.5px;top:0px;width:40px;text-align:center;transform:scaleX(0.94)">24</div>
<div class="abs" style="left:271.0px;top:20px;width:1px;height:3px;background:#555"></div>
<div class="abs" style="left:281.0px;top:16px;width:1px;height:7px;background:#585858"></div>
<div class="rl" style="left:261.5px;top:0px;width:40px;text-align:center;transform:scaleX(0.94)">26</div>
<div class="abs" style="left:291.0px;top:20px;width:1px;height:3px;background:#555"></div>
<div class="abs" style="left:301.0px;top:16px;width:1px;height:7px;background:#585858"></div>
<div class="rl" style="left:281.5px;top:0px;width:40px;text-align:center;transform:scaleX(0.94)">28</div>
<div class="abs" style="left:311.0px;top:20px;width:1px;height:3px;background:#555"></div>
<div class="abs" style="left:321.0px;top:16px;width:1px;height:7px;background:#585858"></div>
<div class="rl" style="left:301.5px;top:0px;width:40px;text-align:center;transform:scaleX(0.94)">30</div>
<div class="abs" style="left:331.0px;top:20px;width:1px;height:3px;background:#555"></div>
<div class="abs" style="left:341.0px;top:16px;width:1px;height:7px;background:#585858"></div>
<div class="rl" style="left:321.5px;top:0px;width:40px;text-align:center;transform:scaleX(0.94)">32</div>
<div class="abs" style="left:351.0px;top:20px;width:1px;height:3px;background:#555"></div>
<div class="abs" style="left:361.0px;top:16px;width:1px;height:7px;background:#585858"></div>
<div class="rl" style="left:341.5px;top:0px;width:40px;text-align:center;transform:scaleX(0.94)">34</div>
<div class="abs" style="left:371.0px;top:20px;width:1px;height:3px;background:#555"></div>
<div class="abs" style="left:381.0px;top:16px;width:1px;height:7px;background:#585858"></div>
<div class="rl" style="left:361.5px;top:0px;width:40px;text-align:center;transform:scaleX(0.94)">36</div>
<div class="abs" style="left:391.0px;top:20px;width:1px;height:3px;background:#555"></div>
<div class="abs" style="left:401.0px;top:16px;width:1px;height:7px;background:#585858"></div>
<div class="rl" style="left:381.5px;top:0px;width:40px;text-align:center;transform:scaleX(0.94)">38</div>
<div class="abs" style="left:411.0px;top:20px;width:1px;height:3px;background:#555"></div>
<div class="abs" style="left:421.0px;top:16px;width:1px;height:7px;background:#585858"></div>
<div class="rl" style="left:401.5px;top:0px;width:40px;text-align:center;transform:scaleX(0.94)">40</div>
<div class="abs" style="left:431.0px;top:20px;width:1px;height:3px;background:#555"></div>
<div class="abs" style="left:441.0px;top:16px;width:1px;height:7px;background:#585858"></div>
<div class="rl" style="left:421.5px;top:0px;width:40px;text-align:center;transform:scaleX(0.94)">42</div>
<div class="abs" style="left:451.0px;top:20px;width:1px;height:3px;background:#555"></div>
<div class="abs" style="left:461.0px;top:16px;width:1px;height:7px;background:#585858"></div>
<div class="rl" style="left:441.5px;top:0px;width:40px;text-align:center;transform:scaleX(0.94)">44</div>
<div class="abs" style="left:471.0px;top:20px;width:1px;height:3px;background:#555"></div>
<div class="abs" style="left:481.0px;top:16px;width:1px;height:7px;background:#585858"></div>
<div class="rl" style="left:461.5px;top:0px;width:40px;text-align:center;transform:scaleX(0.94)">46</div>
<div class="abs" style="left:491.0px;top:20px;width:1px;height:3px;background:#555"></div>
<div class="abs" style="left:501.0px;top:16px;width:1px;height:7px;background:#585858"></div>
<div class="rl" style="left:481.5px;top:0px;width:40px;text-align:center;transform:scaleX(0.94)">48</div>
<div class="abs" style="left:511.0px;top:20px;width:1px;height:3px;background:#555"></div>
<div class="abs" style="left:521.0px;top:16px;width:1px;height:7px;background:#585858"></div>
<div class="rl" style="left:501.5px;top:0px;width:40px;text-align:center;transform:scaleX(0.94)">50</div>
<div class="abs" style="left:531.0px;top:20px;width:1px;height:3px;background:#555"></div>
<div class="abs" style="left:541.0px;top:16px;width:1px;height:7px;background:#585858"></div>
<div class="rl" style="left:521.5px;top:0px;width:40px;text-align:center;transform:scaleX(0.94)">52</div>
<div class="abs" style="left:551.0px;top:20px;width:1px;height:3px;background:#555"></div>
<div class="abs" style="left:561.0px;top:16px;width:1px;height:7px;background:#585858"></div>
<div class="rl" style="left:541.5px;top:0px;width:40px;text-align:center;transform:scaleX(0.94)">54</div>
<div class="abs" style="left:571.0px;top:20px;width:1px;height:3px;background:#555"></div>
<div class="abs" style="left:581.0px;top:16px;width:1px;height:7px;background:#585858"></div>
<div class="rl" style="left:561.5px;top:0px;width:40px;text-align:center;transform:scaleX(0.94)">56</div>
<div class="abs" style="left:591.0px;top:20px;width:1px;height:3px;background:#555"></div>
<div class="abs" style="left:601.0px;top:16px;width:1px;height:7px;background:#585858"></div>
<div class="rl" style="left:581.5px;top:0px;width:40px;text-align:center;transform:scaleX(0.94)">58</div>
<div class="abs" style="left:611.0px;top:20px;width:1px;height:3px;background:#555"></div>
<div class="abs" style="left:621.0px;top:16px;width:1px;height:7px;background:#585858"></div>
<div class="rl" style="left:601.5px;top:0px;width:40px;text-align:center;transform:scaleX(0.94)">60</div>
<div class="abs" style="left:631.0px;top:20px;width:1px;height:3px;background:#555"></div>
<div class="abs" style="left:641.0px;top:16px;width:1px;height:7px;background:#585858"></div>
<div class="rl" style="left:621.5px;top:0px;width:40px;text-align:center;transform:scaleX(0.94)">62</div>
<div class="abs" style="left:651.0px;top:20px;width:1px;height:3px;background:#555"></div>
<div class="abs" style="left:661.0px;top:16px;width:1px;height:7px;background:#585858"></div>
<div class="rl" style="left:641.5px;top:0px;width:40px;text-align:center;transform:scaleX(0.94)">64</div>
<div class="abs" style="left:671.0px;top:20px;width:1px;height:3px;background:#555"></div>
<div class="abs" style="left:681.0px;top:16px;width:1px;height:7px;background:#585858"></div>
<div class="rl" style="left:661.5px;top:0px;width:40px;text-align:center;transform:scaleX(0.94)">66</div>
<div class="abs" style="left:691.0px;top:20px;width:1px;height:3px;background:#555"></div>
<div class="abs" style="left:701.0px;top:16px;width:1px;height:7px;background:#585858"></div>
<div class="rl" style="left:681.5px;top:0px;width:40px;text-align:center;transform:scaleX(0.94)">68</div>
<div class="abs" style="left:711.0px;top:20px;width:1px;height:3px;background:#555"></div>
<div class="abs" style="left:721.0px;top:16px;width:1px;height:7px;background:#585858"></div>
<div class="rl" style="left:701.5px;top:0px;width:40px;text-align:center;transform:scaleX(0.94)">70</div>
<div class="abs" style="left:731.0px;top:20px;width:1px;height:3px;background:#555"></div>
<div class="abs" style="left:741.0px;top:16px;width:1px;height:7px;background:#585858"></div>
<div class="rl" style="left:721.5px;top:0px;width:40px;text-align:center;transform:scaleX(0.94)">72</div>
<div class="abs" style="left:751.0px;top:20px;width:1px;height:3px;background:#555"></div>
<div class="abs" style="left:761.0px;top:16px;width:1px;height:7px;background:#585858"></div>
<div class="rl" style="left:741.5px;top:0px;width:40px;text-align:center;transform:scaleX(0.94)">74</div>
<div class="abs" style="left:771.0px;top:20px;width:1px;height:3px;background:#555"></div>
<div class="abs" style="left:781.0px;top:16px;width:1px;height:7px;background:#585858"></div>
<div class="rl" style="left:761.5px;top:0px;width:40px;text-align:center;transform:scaleX(0.94)">76</div>
<div class="abs" style="left:791.0px;top:20px;width:1px;height:3px;background:#555"></div>
<div class="abs" style="left:801.0px;top:16px;width:1px;height:7px;background:#585858"></div>
<div class="rl" style="left:781.5px;top:0px;width:40px;text-align:center;transform:scaleX(0.94)">78</div>
<div class="abs" style="left:811.0px;top:20px;width:1px;height:3px;background:#555"></div>
<div class="abs" style="left:821.0px;top:16px;width:1px;height:7px;background:#585858"></div>
<div class="rl" style="left:801.5px;top:0px;width:40px;text-align:center;transform:scaleX(0.94)">80</div>
<div class="abs" style="left:831.0px;top:20px;width:1px;height:3px;background:#555"></div>
<div class="abs" style="left:841.0px;top:16px;width:1px;height:7px;background:#585858"></div>
<div class="rl" style="left:821.5px;top:0px;width:40px;text-align:center;transform:scaleX(0.94)">82</div>
<div class="abs" style="left:851.0px;top:20px;width:1px;height:3px;background:#555"></div>
<div class="abs" style="left:861.0px;top:16px;width:1px;height:7px;background:#585858"></div>
<div class="rl" style="left:841.5px;top:0px;width:40px;text-align:center;transform:scaleX(0.94)">84</div>
<div class="abs" style="left:871.0px;top:20px;width:1px;height:3px;background:#555"></div>
<div class="abs" style="left:881.0px;top:16px;width:1px;height:7px;background:#585858"></div>
<div class="rl" style="left:861.5px;top:0px;width:40px;text-align:center;transform:scaleX(0.94)">86</div>
<div class="abs" style="left:891.0px;top:20px;width:1px;height:3px;background:#555"></div>
<div class="abs" style="left:901.0px;top:16px;width:1px;height:7px;background:#585858"></div>
<div class="rl" style="left:881.5px;top:0px;width:40px;text-align:center;transform:scaleX(0.94)">88</div>
<div class="abs" style="left:911.0px;top:20px;width:1px;height:3px;background:#555"></div>
<div class="abs" style="left:921.0px;top:16px;width:1px;height:7px;background:#585858"></div>
<div class="rl" style="left:901.5px;top:0px;width:40px;text-align:center;transform:scaleX(0.94)">90</div>
<div class="abs" style="left:931.0px;top:20px;width:1px;height:3px;background:#555"></div>
<div class="abs" style="left:941.0px;top:16px;width:1px;height:7px;background:#585858"></div>
<div class="rl" style="left:921.5px;top:0px;width:40px;text-align:center;transform:scaleX(0.94)">92</div>
<div class="abs" style="left:951.0px;top:20px;width:1px;height:3px;background:#555"></div>
<div class="abs" style="left:961.0px;top:16px;width:1px;height:7px;background:#585858"></div>
<div class="rl" style="left:941.5px;top:0px;width:40px;text-align:center;transform:scaleX(0.94)">94</div>
<div class="abs" style="left:971.0px;top:20px;width:1px;height:3px;background:#555"></div>
<div class="abs" style="left:981.0px;top:16px;width:1px;height:7px;background:#585858"></div>
<div class="rl" style="left:961.5px;top:0px;width:40px;text-align:center;transform:scaleX(0.94)">96</div>
<div class="abs" style="left:991.0px;top:20px;width:1px;height:3px;background:#555"></div>
<div class="abs" style="left:1001.0px;top:16px;width:1px;height:7px;background:#585858"></div>
<div class="rl" style="left:981.5px;top:0px;width:40px;text-align:center;transform:scaleX(0.94)">98</div>
<div class="abs" style="left:1011.0px;top:20px;width:1px;height:3px;background:#555"></div>
<div class="abs" style="left:1021.0px;top:16px;width:1px;height:7px;background:#585858"></div>
<div class="rl" style="left:1001.5px;top:0px;width:40px;text-align:center;transform:scaleX(0.94)">100</div>
<div class="abs" style="left:1031.0px;top:20px;width:1px;height:3px;background:#555"></div>
<div class="abs" style="left:1041.0px;top:16px;width:1px;height:7px;background:#585858"></div>
<div class="rl" style="left:1021.5px;top:0px;width:40px;text-align:center;transform:scaleX(0.94)">102</div>
<div class="abs" style="left:1051.0px;top:20px;width:1px;height:3px;background:#555"></div>
<div class="abs" style="left:1061.0px;top:16px;width:1px;height:7px;background:#585858"></div>
<div class="rl" style="left:1041.5px;top:0px;width:40px;text-align:center;transform:scaleX(0.94)">104</div>
</div>
<svg style="left:671px;top:37px" width="11" height="6" viewBox="0 0 11 6"><path d="M0 0H11L5.5 6Z" fill="#000"/></svg>
<div id="vruler">
<div class="abs" style="left:20px;top:588.0px;width:3px;height:1px;background:#555"></div>
<div class="abs" style="left:16px;top:578.0px;width:7px;height:1px;background:#585858"></div>
<div class="rl" style="left:-14.3px;top:571.9px;width:40px;text-align:center;transform:rotate(-90deg) scaleX(0.94)">-20</div>
<div class="abs" style="left:20px;top:568.0px;width:3px;height:1px;background:#555"></div>
<div class="abs" style="left:16px;top:558.0px;width:7px;height:1px;background:#585858"></div>
<div class="rl" style="left:-14.3px;top:551.9px;width:40px;text-align:center;transform:rotate(-90deg) scaleX(0.94)">-18</div>
<div class="abs" style="left:20px;top:548.0px;width:3px;height:1px;background:#555"></div>
<div class="abs" style="left:16px;top:538.0px;width:7px;height:1px;background:#585858"></div>
<div class="rl" style="left:-14.3px;top:531.9px;width:40px;text-align:center;transform:rotate(-90deg) scaleX(0.94)">-16</div>
<div class="abs" style="left:20px;top:528.0px;width:3px;height:1px;background:#555"></div>
<div class="abs" style="left:16px;top:518.0px;width:7px;height:1px;background:#585858"></div>
<div class="rl" style="left:-14.3px;top:511.9px;width:40px;text-align:center;transform:rotate(-90deg) scaleX(0.94)">-14</div>
<div class="abs" style="left:20px;top:508.0px;width:3px;height:1px;background:#555"></div>
<div class="abs" style="left:16px;top:498.0px;width:7px;height:1px;background:#585858"></div>
<div class="rl" style="left:-14.3px;top:491.9px;width:40px;text-align:center;transform:rotate(-90deg) scaleX(0.94)">-12</div>
<div class="abs" style="left:20px;top:488.0px;width:3px;height:1px;background:#555"></div>
<div class="abs" style="left:16px;top:478.0px;width:7px;height:1px;background:#585858"></div>
<div class="rl" style="left:-14.3px;top:471.9px;width:40px;text-align:center;transform:rotate(-90deg) scaleX(0.94)">-10</div>
<div class="abs" style="left:20px;top:468.0px;width:3px;height:1px;background:#555"></div>
<div class="abs" style="left:16px;top:458.0px;width:7px;height:1px;background:#585858"></div>
<div class="rl" style="left:-14.3px;top:451.9px;width:40px;text-align:center;transform:rotate(-90deg) scaleX(0.94)">-8</div>
<div class="abs" style="left:20px;top:448.0px;width:3px;height:1px;background:#555"></div>
<div class="abs" style="left:16px;top:438.0px;width:7px;height:1px;background:#585858"></div>
<div class="rl" style="left:-14.3px;top:431.9px;width:40px;text-align:center;transform:rotate(-90deg) scaleX(0.94)">-6</div>
<div class="abs" style="left:20px;top:428.0px;width:3px;height:1px;background:#555"></div>
<div class="abs" style="left:16px;top:418.0px;width:7px;height:1px;background:#585858"></div>
<div class="rl" style="left:-14.3px;top:411.9px;width:40px;text-align:center;transform:rotate(-90deg) scaleX(0.94)">-4</div>
<div class="abs" style="left:20px;top:408.0px;width:3px;height:1px;background:#555"></div>
<div class="abs" style="left:16px;top:398.0px;width:7px;height:1px;background:#585858"></div>
<div class="rl" style="left:-14.3px;top:391.9px;width:40px;text-align:center;transform:rotate(-90deg) scaleX(0.94)">-2</div>
<div class="abs" style="left:20px;top:388.0px;width:3px;height:1px;background:#555"></div>
<div class="abs" style="left:16px;top:378.0px;width:7px;height:1px;background:#585858"></div>
<div class="rl" style="left:-14.3px;top:371.9px;width:40px;text-align:center;transform:rotate(-90deg) scaleX(0.94)">0</div>
<div class="abs" style="left:20px;top:368.0px;width:3px;height:1px;background:#555"></div>
<div class="abs" style="left:16px;top:358.0px;width:7px;height:1px;background:#585858"></div>
<div class="rl" style="left:-14.3px;top:351.9px;width:40px;text-align:center;transform:rotate(-90deg) scaleX(0.94)">2</div>
<div class="abs" style="left:20px;top:348.0px;width:3px;height:1px;background:#555"></div>
<div class="abs" style="left:16px;top:338.0px;width:7px;height:1px;background:#585858"></div>
<div class="rl" style="left:-14.3px;top:331.9px;width:40px;text-align:center;transform:rotate(-90deg) scaleX(0.94)">4</div>
<div class="abs" style="left:20px;top:328.0px;width:3px;height:1px;background:#555"></div>
<div class="abs" style="left:16px;top:318.0px;width:7px;height:1px;background:#585858"></div>
<div class="rl" style="left:-14.3px;top:311.9px;width:40px;text-align:center;transform:rotate(-90deg) scaleX(0.94)">6</div>
<div class="abs" style="left:20px;top:308.0px;width:3px;height:1px;background:#555"></div>
<div class="abs" style="left:16px;top:298.0px;width:7px;height:1px;background:#585858"></div>
<div class="rl" style="left:-14.3px;top:291.9px;width:40px;text-align:center;transform:rotate(-90deg) scaleX(0.94)">8</div>
<div class="abs" style="left:20px;top:288.0px;width:3px;height:1px;background:#555"></div>
<div class="abs" style="left:16px;top:278.0px;width:7px;height:1px;background:#585858"></div>
<div class="rl" style="left:-14.3px;top:271.9px;width:40px;text-align:center;transform:rotate(-90deg) scaleX(0.94)">10</div>
<div class="abs" style="left:20px;top:268.0px;width:3px;height:1px;background:#555"></div>
<div class="abs" style="left:16px;top:258.0px;width:7px;height:1px;background:#585858"></div>
<div class="rl" style="left:-14.3px;top:251.9px;width:40px;text-align:center;transform:rotate(-90deg) scaleX(0.94)">12</div>
<div class="abs" style="left:20px;top:248.0px;width:3px;height:1px;background:#555"></div>
<div class="abs" style="left:16px;top:238.0px;width:7px;height:1px;background:#585858"></div>
<div class="rl" style="left:-14.3px;top:231.9px;width:40px;text-align:center;transform:rotate(-90deg) scaleX(0.94)">14</div>
<div class="abs" style="left:20px;top:228.0px;width:3px;height:1px;background:#555"></div>
<div class="abs" style="left:16px;top:218.0px;width:7px;height:1px;background:#585858"></div>
<div class="rl" style="left:-14.3px;top:211.9px;width:40px;text-align:center;transform:rotate(-90deg) scaleX(0.94)">16</div>
<div class="abs" style="left:20px;top:208.0px;width:3px;height:1px;background:#555"></div>
<div class="abs" style="left:16px;top:198.0px;width:7px;height:1px;background:#585858"></div>
<div class="rl" style="left:-14.3px;top:191.9px;width:40px;text-align:center;transform:rotate(-90deg) scaleX(0.94)">18</div>
<div class="abs" style="left:20px;top:188.0px;width:3px;height:1px;background:#555"></div>
<div class="abs" style="left:16px;top:178.0px;width:7px;height:1px;background:#585858"></div>
<div class="rl" style="left:-14.3px;top:171.9px;width:40px;text-align:center;transform:rotate(-90deg) scaleX(0.94)">20</div>
<div class="abs" style="left:20px;top:168.0px;width:3px;height:1px;background:#555"></div>
<div class="abs" style="left:16px;top:158.0px;width:7px;height:1px;background:#585858"></div>
<div class="rl" style="left:-14.3px;top:151.9px;width:40px;text-align:center;transform:rotate(-90deg) scaleX(0.94)">22</div>
<div class="abs" style="left:20px;top:148.0px;width:3px;height:1px;background:#555"></div>
<div class="abs" style="left:16px;top:138.0px;width:7px;height:1px;background:#585858"></div>
<div class="rl" style="left:-14.3px;top:131.9px;width:40px;text-align:center;transform:rotate(-90deg) scaleX(0.94)">24</div>
<div class="abs" style="left:20px;top:128.0px;width:3px;height:1px;background:#555"></div>
<div class="abs" style="left:16px;top:118.0px;width:7px;height:1px;background:#585858"></div>
<div class="rl" style="left:-14.3px;top:111.9px;width:40px;text-align:center;transform:rotate(-90deg) scaleX(0.94)">26</div>
<div class="abs" style="left:20px;top:108.0px;width:3px;height:1px;background:#555"></div>
<div class="abs" style="left:16px;top:98.0px;width:7px;height:1px;background:#585858"></div>
<div class="rl" style="left:-14.3px;top:91.9px;width:40px;text-align:center;transform:rotate(-90deg) scaleX(0.94)">28</div>
<div class="abs" style="left:20px;top:88.0px;width:3px;height:1px;background:#555"></div>
<div class="abs" style="left:16px;top:78.0px;width:7px;height:1px;background:#585858"></div>
<div class="rl" style="left:-14.3px;top:71.9px;width:40px;text-align:center;transform:rotate(-90deg) scaleX(0.94)">30</div>
<div class="abs" style="left:20px;top:68.0px;width:3px;height:1px;background:#555"></div>
<div class="abs" style="left:16px;top:58.0px;width:7px;height:1px;background:#585858"></div>
<div class="rl" style="left:-14.3px;top:51.9px;width:40px;text-align:center;transform:rotate(-90deg) scaleX(0.94)">32</div>
<div class="abs" style="left:20px;top:48.0px;width:3px;height:1px;background:#555"></div>
<div class="abs" style="left:16px;top:38.0px;width:7px;height:1px;background:#585858"></div>
<div class="rl" style="left:-14.3px;top:31.9px;width:40px;text-align:center;transform:rotate(-90deg) scaleX(0.94)">34</div>
<div class="abs" style="left:20px;top:28.0px;width:3px;height:1px;background:#555"></div>
<div class="abs" style="left:16px;top:18.0px;width:7px;height:1px;background:#585858"></div>
<div class="rl" style="left:-14.3px;top:11.9px;width:40px;text-align:center;transform:rotate(-90deg) scaleX(0.94)">36</div>
<div class="abs" style="left:20px;top:8.0px;width:3px;height:1px;background:#555"></div>
<div class="abs" style="left:16px;top:-2.0px;width:7px;height:1px;background:#585858"></div>
<div class="rl" style="left:-14.3px;top:-8.1px;width:40px;text-align:center;transform:rotate(-90deg) scaleX(0.94)">38</div>
<div class="abs" style="left:20px;top:-12.0px;width:3px;height:1px;background:#555"></div>
</div>
<svg style="left:13px;top:252.4px" width="6" height="11" viewBox="0 0 6 11"><path d="M0 0V11L6 5.5Z" fill="#000"/></svg>
<div id="canvas">
<svg style="left:0;top:0" width="1043" height="577" viewBox="95 155 1043 577">
<defs><pattern id="dots" x="116.00" y="533.0" width="10" height="10" patternUnits="userSpaceOnUse"><rect x="0" y="0" width="1" height="1" fill="#474747"/></pattern></defs>
<line x1="116.5" y1="155" x2="116.5" y2="732" stroke="#242424" stroke-width="1"/>
<line x1="216.5" y1="155" x2="216.5" y2="732" stroke="#242424" stroke-width="1"/>
<line x1="316.5" y1="155" x2="316.5" y2="732" stroke="#242424" stroke-width="1"/>
<line x1="416.5" y1="155" x2="416.5" y2="732" stroke="#242424" stroke-width="1"/>
<line x1="516.5" y1="155" x2="516.5" y2="732" stroke="#242424" stroke-width="1"/>
<line x1="616.5" y1="155" x2="616.5" y2="732" stroke="#242424" stroke-width="1"/>
<line x1="716.5" y1="155" x2="716.5" y2="732" stroke="#242424" stroke-width="1"/>
<line x1="816.5" y1="155" x2="816.5" y2="732" stroke="#242424" stroke-width="1"/>
<line x1="916.5" y1="155" x2="916.5" y2="732" stroke="#242424" stroke-width="1"/>
<line x1="1016.5" y1="155" x2="1016.5" y2="732" stroke="#242424" stroke-width="1"/>
<line x1="1116.5" y1="155" x2="1116.5" y2="732" stroke="#242424" stroke-width="1"/>
<line x1="95" y1="633.5" x2="1138" y2="633.5" stroke="#242424" stroke-width="1"/>
<line x1="95" y1="533.5" x2="1138" y2="533.5" stroke="#242424" stroke-width="1"/>
<line x1="95" y1="433.5" x2="1138" y2="433.5" stroke="#242424" stroke-width="1"/>
<line x1="95" y1="333.5" x2="1138" y2="333.5" stroke="#242424" stroke-width="1"/>
<line x1="95" y1="233.5" x2="1138" y2="233.5" stroke="#242424" stroke-width="1"/>
<rect x="95" y="155" width="1043" height="577" fill="url(#dots)"/>
<path d="M96.5 533.5H136.5M116.5 513.5V553.5" stroke="#a00000" stroke-width="1"/>
<g stroke="#c00000" stroke-width="1" fill="none"><circle cx="196.5" cy="433.5" r="4.5"/><path d="M191.5 433.5h10M196.5 428.5v10"/></g>
<line x1="316.5" y1="333.5" x2="316.5" y2="553.5" stroke="#ff0000" stroke-width="1.1" stroke-dasharray="23 4.5 1 4.5" stroke-dashoffset="17"/>
<line x1="916.5" y1="333.5" x2="916.5" y2="553.5" stroke="#ff0000" stroke-width="1.1" stroke-dasharray="23 4.5 1 4.5" stroke-dashoffset="17"/>
<line x1="236.5" y1="453.5" x2="1076.5" y2="453.5" stroke="#b44a4a" stroke-width="1.1" stroke-dasharray="17 7.5 1 7.5" stroke-dashoffset="1.5"/>
<rect x="216.8" y="353.5" width="800.1" height="180" fill="none" stroke="#fff" stroke-width="2.3"/>
<text transform="translate(426.1 524.3) rotate(-90)" font-family='"Liberation Sans", sans-serif' font-size="29" fill="#fff" textLength="181.8" lengthAdjust="spacingAndGlyphs">104.245.02.4B</text>
<circle cx="356.5" cy="453.5" r="40" fill="none" stroke="#c8524f" stroke-width="2.6"/>
<rect x="311.5" y="448.5" width="10" height="10" fill="#0f80b4" stroke="#5fa3c4" stroke-width="0.8"/>
<rect x="391.5" y="448.5" width="10" height="10" fill="#0f80b4" stroke="#5fa3c4" stroke-width="0.8"/>
<rect x="351.5" y="408.5" width="10" height="10" fill="#0f80b4" stroke="#5fa3c4" stroke-width="0.8"/>
<rect x="351.5" y="488.5" width="10" height="10" fill="#0f80b4" stroke="#5fa3c4" stroke-width="0.8"/>
<circle cx="356.5" cy="453.5" r="5" fill="#0000b4" stroke="#4a4ac0" stroke-width="0.8"/>
<circle cx="956.5" cy="453.5" r="40" fill="none" stroke="#c8524f" stroke-width="2.6"/>
<rect x="911.5" y="448.5" width="10" height="10" fill="#0f80b4" stroke="#5fa3c4" stroke-width="0.8"/>
<rect x="991.5" y="448.5" width="10" height="10" fill="#0f80b4" stroke="#5fa3c4" stroke-width="0.8"/>
<rect x="951.5" y="408.5" width="10" height="10" fill="#0f80b4" stroke="#5fa3c4" stroke-width="0.8"/>
<rect x="951.5" y="488.5" width="10" height="10" fill="#0f80b4" stroke="#5fa3c4" stroke-width="0.8"/>
<circle cx="956.5" cy="453.5" r="5" fill="#0000b4" stroke="#4a4ac0" stroke-width="0.8"/>
<rect x="231.5" y="448.5" width="10" height="10" fill="#0000a8" stroke="#5a5ac8" stroke-width="0.8"/>
<rect x="1071.5" y="448.5" width="10" height="10" fill="#c8002d" stroke="#d85a70" stroke-width="0.8"/>
<circle cx="748" cy="366.2" r="35.3" fill="none" stroke="#36434f" stroke-opacity="0.85" stroke-width="7.8"/>
<circle cx="748" cy="366.2" r="35.6" fill="none" stroke="#485a6a" stroke-opacity="0.8" stroke-width="3.6"/>
<circle cx="748" cy="366.2" r="34.4" fill="none" stroke="#8ea6ba" stroke-opacity="0.3" stroke-width="0.6"/>
<circle cx="748" cy="366.2" r="35.6" fill="none" stroke="#8ea6ba" stroke-opacity="0.45" stroke-width="0.6"/>
<circle cx="748" cy="366.2" r="36.8" fill="none" stroke="#8ea6ba" stroke-opacity="0.4" stroke-width="0.6"/>
<path d="M747.4 364.8V388.6L752.9 383.6L757.3 393.9L761 392.3L756.7 382.1H764.2Z" fill="#fff" stroke="#fff" stroke-width="2.6" stroke-linejoin="round"/>
<path d="M747.4 364.8V388.6L752.9 383.6L757.3 393.9L761 392.3L756.7 382.1H764.2Z" fill="#fff" stroke="#222" stroke-width="0.8" stroke-linejoin="round"/>
</svg></div>
<div class="abs" style="left:1066px;top:47px;width:16px;height:577px;background:#f8f8f8"></div>
<div class="abs" style="left:1071px;top:175px;width:8px;height:321px;border-radius:4px;background:#7e7e7e"></div>
<div class="abs" style="left:23px;top:624px;width:1059px;height:16px;background:#f8f8f8"></div>
<div class="abs" style="left:193px;top:629px;width:627px;height:8px;border-radius:4px;background:#7e7e7e"></div>
<div class="abs" style="left:1028px;top:624.5px;width:54px;height:15.5px;background:#e9e9e9;font-size:13px;letter-spacing:-0.3px;line-height:16px;text-align:right;padding-right:1px">1 &lt; 10</div>
</div>
<div class="abs" style="left:72px;top:748px;width:1081px;height:24px;background:#fff;border-top:2px solid #c8c8c8;border-bottom:1px solid #c2c2c2;font-size:13.4px;letter-spacing:0.12px;line-height:16px;color:#0000d0;padding-left:5.5px"><i>Command:</i> preferences</div>
<div class="abs" style="left:72px;top:772px;width:1081px;height:26px;background:#ececec"></div>
<div class="abs" style="left:73px;top:777px;font-size:13.3px;line-height:16px">Command:</div>
<div class="abs" style="left:142px;top:775px;width:984px;height:19px;background:#fff"></div>
<div class="abs" style="left:1127px;top:772px;width:26px;height:26px;border:1px solid #b5b5b5;background:linear-gradient(#fbfbfb,#ececec)"><div class="abs" style="left:5px;top:7px;width:14px;height:10px;border:1px solid #000;border-top:3px solid #000;background:#fff"></div></div>
<div class="abs" style="left:1153.5px;top:130px;width:2px;height:668px;background:#c4c4c4"></div>
<div id="layers">
<div class="abs" style="left:0;top:0;width:300px;height:22px;background:linear-gradient(#ebebeb,#dcdcdc);font-size:12px;letter-spacing:0.1px;line-height:23.4px;text-align:center;padding-left:34px">Layer List</div>
<div class="abs" style="left:0;top:22px;width:300px;height:26px;background:#b4b4b4"></div>
<div class="lbtn" style="left:1px;width:59px"></div>
<div class="lbtn" style="left:61px;width:59px"></div>
<div class="lbtn" style="left:121px;width:59px"></div>
<div class="lbtn" style="left:181px;width:59px"></div>
<div class="lbtn" style="left:241px;width:59px"></div>
<div class="abs" style="left:0;top:47px;width:300px;height:1.5px;background:#ababab"></div>
<div class="lrow" style="top:49px"><div class="abs" style="left:6px;top:6px;width:16px;height:9px;border:1px solid #000;background:#fff"></div><span class="abs" style="left:28px;top:0.5px">0</span></div>
<div class="lrow" style="top:69px"><div class="abs" style="left:6px;top:6px;width:16px;height:9px;border:1px solid #000;background:#ff0000"></div><span class="abs" style="left:28px;top:0.5px">Center</span></div>
<div class="lrow" style="top:89px"><div class="abs" style="left:6px;top:6px;width:16px;height:9px;border:1px solid #000;background:#000"></div><span class="abs" style="left:28px;top:0.5px">Hidden</span></div>
<div class="lrow" style="top:109px"><div class="abs" style="left:6px;top:6px;width:16px;height:9px;border:1px solid #000;background:#fff"></div><span class="abs" style="left:28px;top:0.5px">Visible</span></div>
<svg style="left:0;top:0" width="300" height="690" viewBox="1155 108 300 690"><circle cx="1164" cy="118" r="6.8" fill="#6c6c6c"/><path d="M1161 115L1167 121M1167 115L1161 121" stroke="#f0f0f0" stroke-width="2.1" stroke-linecap="round"/><circle cx="1182" cy="118" r="6.8" fill="#6c6c6c"/><rect x="1180.6" y="115" width="5" height="3.8" rx="0.6" fill="none" stroke="#f0f0f0" stroke-width="1"/><rect x="1178.4" y="117.4" width="5" height="3.8" rx="0.6" fill="#6c6c6c" stroke="#f0f0f0" stroke-width="1"/><g transform="translate(1185 143.2) scale(1.0)"><path d="M-7.6 0.3C-5.5 -4.2 -1.5 -5.6 1.2 -5.4C4.2 -5.2 6.6 -3 7.6 0.2C6 3.6 3 5.4 0 5.4C-3.4 5.4 -6.2 3.4 -7.6 0.3Z" fill="#000"/><path d="M-5.2 0.2C-4 1.8 -2.2 3.6 0.2 3.6C2.6 3.6 4.4 2 5.4 0.4C4.8 -0.6 4.2 -1.2 3.4 -1.8C3.6 0.8 2 2.4 0 2.4C-2 2.4 -3.4 0.8 -3.2 -1.4C-4 -1 -4.6 -0.5 -5.2 0.2Z" fill="#fff"/><circle cx="-0.9" cy="-1.5" r="0.7" fill="#fff"/></g><g transform="translate(1245 143.2) scale(1.0)"><path d="M-7.6 0.3C-5.5 -4.2 -1.5 -5.6 1.2 -5.4C4.2 -5.2 6.6 -3 7.6 0.2C6 3.6 3 5.4 0 5.4C-3.4 5.4 -6.2 3.4 -7.6 0.3Z" fill="#a9a9a9"/><path d="M-5.2 0.2C-4 1.8 -2.2 3.6 0.2 3.6C2.6 3.6 4.4 2 5.4 0.4C4.8 -0.6 4.2 -1.2 3.4 -1.8C3.6 0.8 2 2.4 0 2.4C-2 2.4 -3.4 0.8 -3.2 -1.4C-4 -1 -4.6 -0.5 -5.2 0.2Z" fill="#fff"/><circle cx="-0.9" cy="-1.5" r="0.7" fill="#fff"/></g><path d="M1298.6 143.2H1310.6M1304.6 137.2V149.2" stroke="#a00000" stroke-width="3.6"/><path d="M1299 143.2H1310.2M1304.6 137.6V148.8" stroke="#ff0000" stroke-width="2.6"/><path d="M1358.6 143.2H1371" stroke="#a00000" stroke-width="3.6"/><path d="M1359 143.2H1370.6" stroke="#ff0000" stroke-width="2.6"/><g transform="translate(1417.8 149.8) rotate(-43.6)"><path d="M0 0L3.6 -1.4H20.2V1.4H3.6Z" fill="#e8a436" stroke="#a87020" stroke-width="0.4"/><path d="M0 0L3.6 -1.4V1.4Z" fill="#d8b070"/><path d="M0 0L1.5 -0.6V0.6Z" fill="#222"/><path d="M17.0 -1.5H20.2V1.5H17.0Z" fill="#e82020"/><path d="M3.6 -0.5H17.0" stroke="#f8d070" stroke-width="0.7"/></g><g transform="translate(1423 166.7) scale(1.0)"><path d="M-7.6 0.3C-5.5 -4.2 -1.5 -5.6 1.2 -5.4C4.2 -5.2 6.6 -3 7.6 0.2C6 3.6 3 5.4 0 5.4C-3.4 5.4 -6.2 3.4 -7.6 0.3Z" fill="#000"/><path d="M-5.2 0.2C-4 1.8 -2.2 3.6 0.2 3.6C2.6 3.6 4.4 2 5.4 0.4C4.8 -0.6 4.2 -1.2 3.4 -1.8C3.6 0.8 2 2.4 0 2.4C-2 2.4 -3.4 0.8 -3.2 -1.4C-4 -1 -4.6 -0.5 -5.2 0.2Z" fill="#fff"/><circle cx="-0.9" cy="-1.5" r="0.7" fill="#fff"/></g><path d="M1441.7 166.39999999999998V163.79999999999998A3.3 3.3 0 0 1 1448.3 163.79999999999998V166.39999999999998" fill="none" stroke="#b9b9b9" stroke-width="1.1"/><rect x="1440" y="166.2" width="10" height="7.2" fill="#b9b9b9"/><g transform="translate(1423 186.7) scale(1.0)"><path d="M-7.6 0.3C-5.5 -4.2 -1.5 -5.6 1.2 -5.4C4.2 -5.2 6.6 -3 7.6 0.2C6 3.6 3 5.4 0 5.4C-3.4 5.4 -6.2 3.4 -7.6 0.3Z" fill="#000"/><path d="M-5.2 0.2C-4 1.8 -2.2 3.6 0.2 3.6C2.6 3.6 4.4 2 5.4 0.4C4.8 -0.6 4.2 -1.2 3.4 -1.8C3.6 0.8 2 2.4 0 2.4C-2 2.4 -3.4 0.8 -3.2 -1.4C-4 -1 -4.6 -0.5 -5.2 0.2Z" fill="#fff"/><circle cx="-0.9" cy="-1.5" r="0.7" fill="#fff"/></g><path d="M1441.7 186.39999999999998V183.79999999999998A3.3 3.3 0 0 1 1448.3 183.79999999999998V186.39999999999998" fill="none" stroke="#b9b9b9" stroke-width="1.1"/><rect x="1440" y="186.2" width="10" height="7.2" fill="#b9b9b9"/><g transform="translate(1423 206.7) scale(1.0)"><path d="M-7.6 0.3C-5.5 -4.2 -1.5 -5.6 1.2 -5.4C4.2 -5.2 6.6 -3 7.6 0.2C6 3.6 3 5.4 0 5.4C-3.4 5.4 -6.2 3.4 -7.6 0.3Z" fill="#000"/><path d="M-5.2 0.2C-4 1.8 -2.2 3.6 0.2 3.6C2.6 3.6 4.4 2 5.4 0.4C4.8 -0.6 4.2 -1.2 3.4 -1.8C3.6 0.8 2 2.4 0 2.4C-2 2.4 -3.4 0.8 -3.2 -1.4C-4 -1 -4.6 -0.5 -5.2 0.2Z" fill="#fff"/><circle cx="-0.9" cy="-1.5" r="0.7" fill="#fff"/></g><path d="M1441.7 206.39999999999998V203.79999999999998A3.3 3.3 0 0 1 1448.3 203.79999999999998V206.39999999999998" fill="none" stroke="#b9b9b9" stroke-width="1.1"/><rect x="1440" y="206.2" width="10" height="7.2" fill="#b9b9b9"/><g transform="translate(1423 226.7) scale(1.0)"><path d="M-7.6 0.3C-5.5 -4.2 -1.5 -5.6 1.2 -5.4C4.2 -5.2 6.6 -3 7.6 0.2C6 3.6 3 5.4 0 5.4C-3.4 5.4 -6.2 3.4 -7.6 0.3Z" fill="#000"/><path d="M-5.2 0.2C-4 1.8 -2.2 3.6 0.2 3.6C2.6 3.6 4.4 2 5.4 0.4C4.8 -0.6 4.2 -1.2 3.4 -1.8C3.6 0.8 2 2.4 0 2.4C-2 2.4 -3.4 0.8 -3.2 -1.4C-4 -1 -4.6 -0.5 -5.2 0.2Z" fill="#fff"/><circle cx="-0.9" cy="-1.5" r="0.7" fill="#fff"/></g><path d="M1441.7 226.39999999999998V223.79999999999998A3.3 3.3 0 0 1 1448.3 223.79999999999998V226.39999999999998" fill="none" stroke="#b9b9b9" stroke-width="1.1"/><rect x="1440" y="226.2" width="10" height="7.2" fill="#b9b9b9"/><g transform="translate(1394.3 233.3) rotate(-43.5)"><path d="M0 0L3.6 -1.4H18.6V1.4H3.6Z" fill="#e8a436" stroke="#a87020" stroke-width="0.4"/><path d="M0 0L3.6 -1.4V1.4Z" fill="#d8b070"/><path d="M0 0L1.5 -0.6V0.6Z" fill="#222"/><path d="M15.4 -1.5H18.6V1.5H15.4Z" fill="#e82020"/><path d="M3.6 -0.5H15.4" stroke="#f8d070" stroke-width="0.7"/></g></svg>
</div>
<div id="right">
<div class="abs" style="left:8px;top:8px;width:2px;height:2px;background:#a8a8a8"></div>
<div class="abs" style="left:14px;top:8px;width:2px;height:2px;background:#a8a8a8"></div>
<div class="abs" style="left:20px;top:8px;width:2px;height:2px;background:#a8a8a8"></div>
<div class="abs" style="left:26px;top:8px;width:2px;height:2px;background:#a8a8a8"></div>
<div class="abs" style="left:32px;top:8px;width:2px;height:2px;background:#a8a8a8"></div>
<div class="sel" style="left:1px;top:12px;width:43px;height:43px;border-radius:4px"></div>
<div class="sel" style="left:1px;top:309px;width:43px;height:43px;border-radius:4px"></div>
<div class="abs" style="left:1px;top:153px;width:44px;height:1px;background-image:linear-gradient(90deg,#555 1px,transparent 1px);background-size:3px 1px"></div>
<div class="abs" style="left:1px;top:301px;width:44px;height:1px;background-image:linear-gradient(90deg,#555 1px,transparent 1px);background-size:3px 1px"></div>
<div class="abs" style="left:8px;top:19px;width:28px;height:28px;border:1px solid #222;border-top:5px solid #000;background:#fff"><div class="abs" style="left:0;top:-4px;width:3px;height:3px;background:#fff"></div></div>
<div class="abs" style="left:8px;top:66px;width:28px;height:28px;border:1px solid #222;border-top:5px solid #000;background:#fff"><div class="abs" style="left:0;top:-4px;width:3px;height:3px;background:#fff"></div></div>
<div class="abs" style="left:8px;top:112px;width:28px;height:28px;border:1px solid #222;border-top:5px solid #000;background:#fff"><div class="abs" style="left:0;top:-4px;width:3px;height:3px;background:#fff"></div></div>
<div class="abs" style="left:8px;top:168px;width:28px;height:28px;border:1px solid #222;border-top:5px solid #000;background:#fff"><div class="abs" style="left:0;top:-4px;width:3px;height:3px;background:#fff"></div></div>
<div class="abs" style="left:8px;top:214px;width:28px;height:28px;border:1px solid #222;border-top:5px solid #000;background:#fff"><div class="abs" style="left:0;top:-4px;width:3px;height:3px;background:#fff"></div></div>
<div class="abs" style="left:8px;top:260px;width:28px;height:28px;border:1px solid #222;border-top:5px solid #000;background:#fff"><div class="abs" style="left:0;top:-4px;width:3px;height:3px;background:#fff"></div></div>
<div class="abs" style="left:8px;top:316px;width:28px;height:28px;border:1px solid #222;border-top:5px solid #000;background:#fff"><div class="abs" style="left:0;top:-4px;width:3px;height:3px;background:#fff"></div></div>
<div class="abs" style="left:8px;top:363px;width:28px;height:28px;border:1px solid #222;border-top:5px solid #000;background:#fff"><div class="abs" style="left:0;top:-4px;width:3px;height:3px;background:#fff"></div></div>
<svg style="left:0;top:0" width="45" height="690" viewBox="1455 108 45 690"><path d="M1470.2 142.2L1478.8 137.2V146.8L1470.2 151.8Z" fill="#8a8a8a" stroke="#444" stroke-width="0.6"/><path d="M1471.8 142.6L1480.4 137.6V147.2L1471.8 152.2Z" fill="#b4b4b4" stroke="#444" stroke-width="0.6"/><path d="M1473.6 143L1483 137.4V147.4L1473.6 153Z" fill="#fff" stroke="#555" stroke-width="0.6"/><path d="M1476.2 149.2L1480.6 140.6L1481 147.4M1477.6 147.4L1481 145.4" stroke="#ff3030" stroke-width="0.9" fill="none"/><rect x="1470.3" y="184.3" width="10.6" height="7.4" fill="#fdf0c0" stroke="#333" stroke-width="0.8"/><circle cx="1479.4" cy="190.9" r="4.2" fill="#fdf0c0" fill-opacity="0.85" stroke="#333" stroke-width="0.8"/><path d="M1475.2 191.7H1480.9V186.8" stroke="#555" stroke-width="0.7" fill="none"/><rect x="1468.4" y="230.3" width="17.2" height="11.2" rx="2.4" fill="#f7f7f5" stroke="#c4d2ea" stroke-width="0.9"/><rect x="1466.2" y="284.2" width="4.8" height="3.4" rx="0.5" fill="#000"/><rect x="1473.3" y="284.4" width="14.2" height="3" fill="#fff" stroke="#222" stroke-width="0.7"/><rect x="1466.2" y="290.1" width="4.8" height="3.4" rx="0.5" fill="#000"/><rect x="1473.3" y="290.3" width="14.2" height="3" fill="#fff" stroke="#222" stroke-width="0.7"/><rect x="1466.2" y="296.1" width="4.8" height="3.4" rx="0.5" fill="#000"/><rect x="1473.3" y="296.3" width="14.2" height="3" fill="#fff" stroke="#222" stroke-width="0.7"/><path d="M1469.8 332.4L1475.6 339.6V344L1478.4 345.2V339.6L1484.2 332.4Z" fill="#9a9a9a" stroke="#555" stroke-width="0.5" stroke-linejoin="round"/><ellipse cx="1477" cy="332.3" rx="7.2" ry="1.4" fill="#6a6a6a" stroke="#444" stroke-width="0.5"/><path d="M1469 377.4V391L1473.6 388V380.4Z" fill="#fff" stroke="#222" stroke-width="0.8" stroke-linejoin="round"/><path d="M1473.6 380.4H1483Q1484.6 380.4 1484.6 382V386.4Q1484.6 388 1483 388H1473.6Z" fill="#9a9a9a" stroke="#333" stroke-width="0.7"/><path d="M1476 381v6.6M1478 381v6.6M1480 381v6.6M1482 381v6.6" stroke="#6a6a6a" stroke-width="0.6"/><path d="M1467 384.2H1487.6" stroke="#ff6a6a" stroke-width="0.7" stroke-dasharray="3 1 1 1"/><text x="1465.6" y="433.6" font-family='"Liberation Sans", sans-serif' font-size="2.9" fill="#444" textLength="16" lengthAdjust="spacingAndGlyphs">Command: line</text><text x="1465.6" y="437.1" font-family='"Liberation Sans", sans-serif' font-size="2.9" fill="#444" textLength="16" lengthAdjust="spacingAndGlyphs">Command: arc</text><text x="1465.6" y="440.6" font-family='"Liberation Sans", sans-serif' font-size="2.9" fill="#444" textLength="16" lengthAdjust="spacingAndGlyphs">Command: circle</text><text x="1465.6" y="444.1" font-family='"Liberation Sans", sans-serif' font-size="2.9" fill="#444" textLength="16" lengthAdjust="spacingAndGlyphs">Command: trim</text><path d="M1463.5 446.6H1490.5" stroke="#222" stroke-width="0.7"/><text x="1465" y="450.6" font-family='"Liberation Sans", sans-serif' font-size="3.3" fill="#222">C:</text><text x="1472.4" y="450.6" font-family='"Liberation Sans", sans-serif' font-size="3.3" fill="#222" textLength="15" lengthAdjust="spacingAndGlyphs">command</text><rect x="1470.9" y="480.4" width="12.2" height="13.4" rx="0.8" fill="#c88a2c" stroke="#a06a14" stroke-width="0.6"/><path d="M1472.3 481.4H1481.7V490.6L1480 492.4H1472.3Z" fill="#f2f2f2" stroke="#aaa" stroke-width="0.3"/><path d="M1473.6 484.2h6.6M1473.6 485.8h6.6M1473.6 487.4h6.6M1473.6 489h5" stroke="#c6c6c6" stroke-width="0.6"/><path d="M1474 479.3H1480V480.4H1481V482.3H1473V480.4H1474Z" fill="#8c8c84"/><path d="M1480 492.4V490.8H1481.7Z" fill="#aaa"/></svg>
</div>
<div id="status">
<div style="left:2px;top:9px" class="num">63.1422,16.7454</div>
<div style="left:2px;top:29px" class="num">@55.1422,6.7454</div>
<div class="abs" style="left:253px;top:4px;width:1px;height:40px;background:#7a7a7a"></div>
<div style="left:256px;top:9px" class="num">65.3249&lt;15°</div>
<div style="left:256px;top:29px" class="num">@55.5532&lt;7°</div>
<div class="abs" style="left:506px;top:21px;width:6px;height:6px;border-radius:3px;background:#cdcdcd"></div>
<div class="abs" style="left:939px;top:21px;width:6px;height:6px;border-radius:3px;background:#cdcdcd"></div>
<div class="abs" style="left:1269px;top:21px;width:6px;height:6px;border-radius:3px;background:#cdcdcd"></div>
<div style="left:499px;top:13px;width:200px;text-align:right">Select entity or region</div>
<div style="left:499px;top:24px;width:200px;text-align:right">Move entity or reference</div>
<div style="left:949px;top:13px">Selected entities:</div>
<div style="left:949px;top:24px">3 Entities on 2 Layers.</div>
<svg style="left:716px;top:6.7px" width="20" height="32" viewBox="0 0 20 32"><rect x="1.5" y="1" width="17" height="29.5" rx="8.5" fill="#fff" stroke="#333" stroke-width="1"/><path d="M1.5 13.5H18.5M10 1V13.5" stroke="#333" stroke-width="0.9" fill="none"/><rect x="8.5" y="4" width="3" height="6" rx="1.5" fill="#fff" stroke="#333" stroke-width="0.8"/></svg>
</div>
</div></body></html>
